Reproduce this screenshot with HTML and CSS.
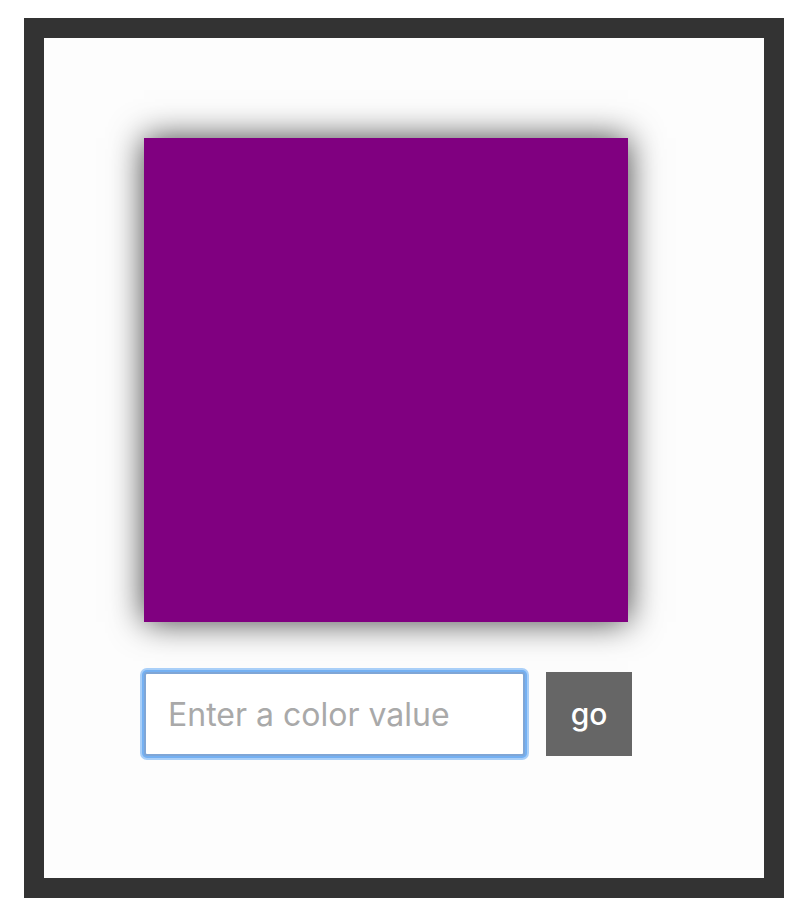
FILE: index.html
```html
<!DOCTYPE html>
<html lang="en">
<head>
    <meta charset="UTF-8">
    <meta name="viewport" content="width=device-width, initial-scale=1.0">
    <title>Color Box</title>
    <link rel="stylesheet" href="styles.css">
</head>
<body>
    <div class="frame">
        <div class="swatch"></div>
        <form class="color-form">
            <input type="text" class="color-input" placeholder="Enter a color value">
            <button type="submit" class="go-btn">go</button>
        </form>
    </div>
</body>
</html>
```

FILE: styles.css
```css
/* Global */
* {
    margin: 0;
    padding: 0;
    box-sizing: border-box;
}

body {
    background: #fff;
    padding: 18px 0 0 24px;
    font-family: 'Inter', 'Liberation Sans', sans-serif;
}

/* Frame */
.frame {
    width: 760px;
    height: 880px;
    border: 20px solid #333;
    background: #fdfdfd;
    padding: 100px 0 0 100px;
}

/* Color swatch */
.swatch {
    width: 484px;
    height: 484px;
    background: purple;
    box-shadow: 0 0 32px rgba(0, 0, 0, 0.75);
}

/* Form */
.color-form {
    display: flex;
    align-items: center;
    gap: 21px;
    margin-top: 50px;
}

.color-input {
    width: 381px;
    height: 84px;
    border: 2px solid #7fa6d6;
    box-shadow: 0 0 0 2px #74b0f2, 0 0 0 4px #a9cff8;
    border-radius: 3px;
    background: #fff;
    padding: 0 22px;
    font-family: inherit;
    font-size: 32px;
    color: #333;
    outline: none;
}

.color-input::placeholder {
    color: #a9a9a9;
}

.go-btn {
    width: 86px;
    height: 84px;
    border: none;
    background: #666;
    color: #fff;
    font-family: inherit;
    font-size: 30px;
    font-weight: 500;
    cursor: pointer;
}
```
